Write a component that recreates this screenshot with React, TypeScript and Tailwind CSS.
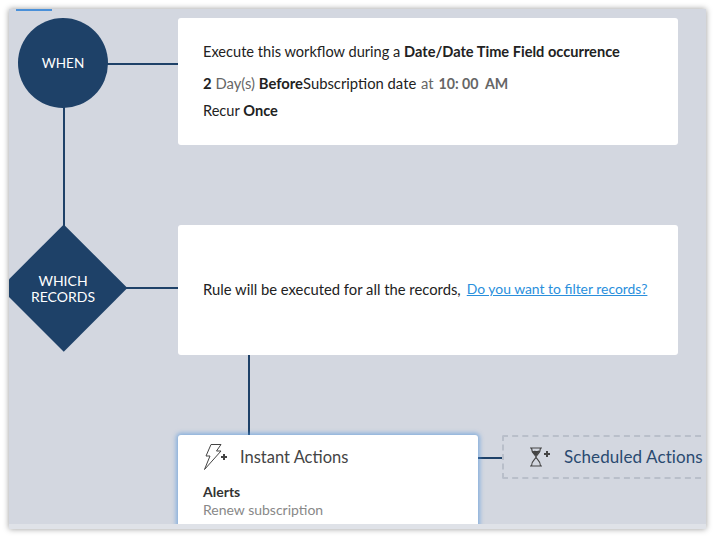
export default function App() {
  const font = { fontFamily: 'Lato, "Liberation Sans", sans-serif' };
  return (
    <div className="w-[714px] h-[538px] bg-white pt-[8px] pl-[9px] overflow-hidden" style={font}>
      <div className="w-[697px] h-[520px] mt-px bg-[#d3d7e0] shadow-[0_0_6px_rgba(0,0,0,0.4)] flex flex-col">
        <div className="relative h-[515px] w-[694px] overflow-hidden">
          <div className="absolute left-[7px] top-0 w-[36px] h-[2px] bg-[#4a90d9]" />

          <div className="absolute left-[54px] top-[95px] w-[2px] h-[130px] bg-[#1e4168]" />
          <div className="absolute left-[95px] top-[54px] w-[74px] h-[2px] bg-[#1e4168]" />
          <div className="absolute left-[114px] top-[278px] w-[55px] h-[2px] bg-[#1e4168]" />
          <div className="absolute left-[239px] top-[340px] w-[2px] h-[90px] bg-[#1e4168]" />
          <div className="absolute left-[464px] top-[448px] w-[30px] h-[2px] bg-[#1e4168]" />

          <div className="absolute left-[9px] top-[9px] w-[90px] h-[90px] rounded-full bg-[#1e4168] flex items-center justify-center text-white text-[13.5px]">WHEN</div>

          <div className="absolute left-[10.25px] top-[234.25px] w-[89.5px] h-[89.5px] rotate-45 bg-[#1e4168]" />
          <div className="absolute left-[9px] top-[264px] w-[90px] text-center text-white text-[14px] leading-[16px]">WHICH<br />RECORDS</div>

          <div className="absolute left-[169px] top-[9px] w-[500px] h-[127px] bg-white rounded-[3px] pl-[25px] pt-[24px] text-[14.6px] text-[#222] flex flex-col">
            <div className="h-[20px] leading-[20px] mb-[11px]">Execute this workflow during a <b className="font-bold">Date/Date Time Field occurrence</b></div>
            <div className="h-[20px] leading-[20px] mb-[8px] text-[14.8px]"><b className="font-bold">2</b> <span className="text-[#666]">Day(s)</span> <b className="font-bold">Before</b>Subscription date <span className="ml-[1px] text-[#666]">at</span><b className="ml-[5px] text-[14.2px] font-bold text-[#666]">10: 00 &nbsp;AM</b></div>
            <div className="h-[20px] leading-[20px]">Recur <b className="font-bold">Once</b></div>
          </div>

          <div className="absolute left-[169px] top-[216px] w-[500px] h-[130px] bg-white rounded-[3px] pl-[25px] flex items-center text-[14.8px] text-[#222]">
            <span className="-mt-[2px]">Rule will be executed for all the records,</span>
            <span className="ml-[6px] -mt-[1px] text-[13.9px] text-[#2a8fdc] underline">Do you want to filter records?</span>
          </div>

          <div className="absolute left-[169px] top-[426px] w-[300px] h-[120px] bg-white rounded-[3px] shadow-[0_0_4px_2px_rgba(74,144,217,0.55)] pl-[25px]">
            <div className="flex items-center h-[44px]">
              <svg width="24" height="28" viewBox="0 0 24 28" fill="none" stroke="#444" strokeWidth="1">
                <path d="M8 1.5 L18 1.5 L13.5 8 L18 8 L1.5 26.5 L7 13 L3 13 Z" />
                <path d="M18 14 h6 M21 11 v6" strokeWidth="2" />
              </svg>
              <span className="ml-[13px] text-[16.5px] text-[#444]">Instant Actions</span>
            </div>
            <div className="mt-[3px] text-[14px] font-bold text-[#333] leading-[20px]">Alerts</div>
            <div className="text-[14px] text-[#888] leading-[16px]">Renew subscription</div>
          </div>

          <div className="absolute left-[493px] top-[426px] w-[260px] h-[44px] border-2 border-dashed border-[#b9bfca] rounded-[2px] flex items-center pl-[25px]">
            <svg width="22" height="20" viewBox="0 0 22 20" fill="none" stroke="#444" strokeWidth="1.2">
              <path d="M1 1 H13 M1 19 H13 M2.5 1 C2.5 7 7 8 7 10 C7 12 2.5 13 2.5 19 M11.5 1 C11.5 7 7 8 7 10 C7 12 11.5 13 11.5 19" />
              <path d="M4 5 C6 3 8 6 10 4 L7 8 Z" fill="#444" />
              <path d="M15 7 h6 M18 4 v6" strokeWidth="2" />
            </svg>
            <span className="ml-[13px] text-[17px] text-[#2a4a70] whitespace-nowrap tracking-[0.1px]">Scheduled Actions</span>
          </div>
        </div>
        <div className="flex-1 bg-[#dfe2e8]" />
      </div>
    </div>
  );
}
